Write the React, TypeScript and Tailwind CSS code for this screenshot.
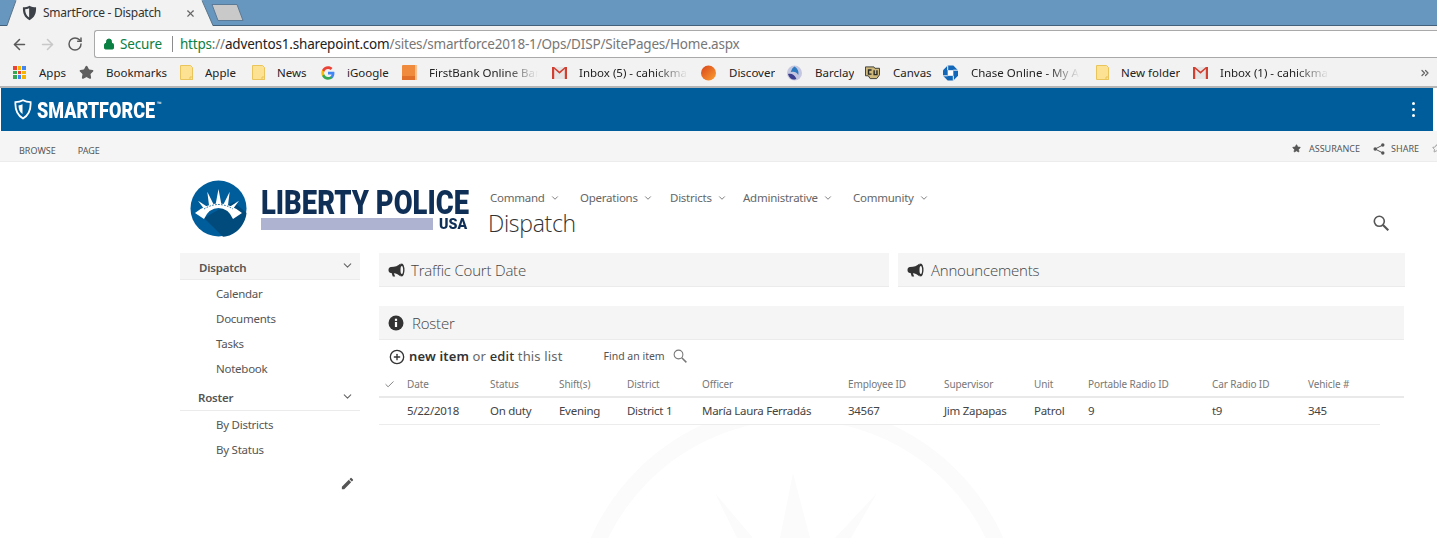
import { ArrowLeft, ArrowRight, Check, ChevronDown, ChevronsRight, CirclePlus, Lock, RotateCw, Star, X } from "lucide-react";
import type { ReactNode } from "react";

const Folder = () => (
  <svg width="13" height="15" viewBox="0 0 13 15">
    <path d="M.5.5h10l2 2v12H.5z" fill="#fde293" stroke="#eac55c" />
    <path d="M10 12h2.5v2.5H10z" fill="#fde293" stroke="#eac55c" />
  </svg>
);

const Gmail = () => (
  <svg width="15" height="12" viewBox="0 0 15 12">
    <rect width="15" height="12" fill="#e5e5e5" />
    <path d="M0 0h2.2v12H0zM12.8 0H15v12h-2.2z" fill="#d23f31" />
    <path d="M0 0h2l5.500 4.600L13 0h2L7.500 6.800z" fill="#d23f31" />
  </svg>
);

const GoogleG = () => (
  <svg width="14" height="14" viewBox="0 0 48 48">
    <path fill="#4285F4" d="M46 24.500c0-1.600-.1-3.100-.4-4.500H24v9h12.400c-.5 2.900-2.200 5.300-4.600 6.900v5.700h7.400C43.500 37.600 46 31.600 46 24.500z" />
    <path fill="#34A853" d="M24 47c6.200 0 11.400-2 15.200-5.500l-7.400-5.700c-2 1.400-4.700 2.200-7.800 2.200-6 0-11-4-12.800-9.500H3.600v5.900C7.400 41.900 15.100 47 24 47z" />
    <path fill="#FBBC05" d="M11.200 28.500c-.5-1.400-.7-2.900-.7-4.500s.3-3.100.7-4.500v-5.900H3.600C2 16.700 1 20.200 1 24s1 7.300 2.600 10.400z" />
    <path fill="#EA4335" d="M24 10c3.400 0 6.400 1.200 8.800 3.400l6.600-6.600C35.400 3.100 30.200 1 24 1 15.100 1 7.400 6.100 3.600 13.600l7.600 5.900C13 14 18 10 24 10z" />
  </svg>
);

const AppsGrid = () => {
  const colors = ["#ea4335", "#f4b400", "#4285f4", "#34a853", "#ea4335", "#f4b400", "#34a853", "#4285f4", "#f4b400"];
  return (
    <div className="grid grid-cols-3 gap-[1px]">
      {colors.map((c, i) => (
        <span key={i} className="size-[3.500px]" style={{ backgroundColor: c }} />
      ))}
    </div>
  );
};

const OrangeBook = () => (
  <svg width="15" height="15" viewBox="0 0 15 15">
    <rect width="15" height="15" rx="1" fill="#f08a3c" />
    <rect y="11" width="15" height="4" fill="#e0702a" />
    <rect x="13" width="2" height="15" fill="#fbc08f" />
  </svg>
);

const Sphere = () => (
  <svg width="16" height="16" viewBox="0 0 16 16">
    <defs>
      <linearGradient id="sun" x1="0" y1="0" x2="1" y2="1">
        <stop offset="0" stopColor="#d9441c" />
        <stop offset="1" stopColor="#fba12f" />
      </linearGradient>
    </defs>
    <circle cx="8" cy="8" r="8" fill="url(#sun)" />
  </svg>
);

const BarclayMark = () => (
  <svg width="16" height="16" viewBox="0 0 16 16">
    <circle cx="8" cy="8" r="8" fill="#c5c7e0" />
    <path d="M8 1c3 2 5 5 4 9-2-3-4-4-8-3 1-3 2-5 4-6z" fill="#2b79bf" />
    <path d="M1 9c4-1 7 1 9 5-3 2-7 1-9-5z" fill="#3d3f8f" />
  </svg>
);

const BuffMark = () => (
  <svg width="16" height="15" viewBox="0 0 16 15">
    <path d="M.5 1.500h9l1 1.500h5v7l-3 4h-7l-2-3h-3z" fill="#cfb87c" stroke="#3a3a32" />
    <path d="M3 4h4v1.500H4.500v3H7V10H3zM9 5h1.500v4H12V5h1.500v5.500H9z" fill="#2b2b26" />
  </svg>
);

const ChaseMark = () => (
  <svg width="16" height="16" viewBox="0 0 16 16">
    <path d="M5 0h6l5 5v6l-5 5H5l-5-5V5z" fill="#1267b8" />
    <rect x="5" y="5" width="6" height="6" fill="#fff" />
    <path d="M5 5V0M11 5h5M11 11v5M5 11H0" stroke="#fff" />
  </svg>
);

const TabShield = () => (
  <svg width="15" height="16" viewBox="0 0 20 22">
    <path d="M10 1c2.600 1.500 5.500 2.200 9 2.200.4 8-1.700 14-9 17.800C2.700 17.200.6 11.200 1 3.200 4.500 3.200 7.400 2.500 10 1z" fill="#3c4148" />
    <path d="M9.500 4.300v13c-3.800-2.700-5.500-6.700-5.500-11.500 2-.1 3.800-.6 5.500-1.500z" fill="#f2f2f2" />
  </svg>
);

const BarShield = () => (
  <svg width="18" height="21" viewBox="0 0 18 21">
    <path d="M9 1.200c2.300 1.300 4.800 1.900 7.600 2 .4 7.500-1.500 12.800-7.600 16.300C2.900 16 1 10.700 1.400 3.200c2.800-.1 5.300-.7 7.600-2z" fill="none" stroke="#fff" strokeWidth="1.800" />
    <path d="M8.500 5.200v9.800C5.800 13 4.500 10 4.500 6.400c1.500-.1 2.800-.5 4-1.200z" fill="#fff" />
  </svg>
);

const CrownLogo = () => (
  <svg width="57" height="57" viewBox="0 0 57 57">
    <circle cx="28.500" cy="28.500" r="28" fill="#005d9b" />
    <path d="M14 38l19 18.800C45 56 55 46 56.500 33L44 22 28 30z" fill="#004a7c" />
    <path d="M28.500 9l3 16h-6zM17.300 11.700l6.700 13.500-4.800 1.600zM39.700 11.700l-1.900 15.100-4.800-1.600zM8 20.800l10 6.400-3.200 2.800zM49 20.800l-6.800 9.200-3.200-2.800z" fill="#fff" />
    <path d="M5 33Q28.500 14 52 33L43 39Q38 28 28.500 28 19 28 14 39z" fill="#fff" />
    <path d="M14 29Q28.500 20 43 29" fill="none" stroke="#005d9b" strokeWidth="1" strokeDasharray="1.500 1.500" />
  </svg>
);

const Megaphone = () => (
  <svg width="17" height="14" viewBox="0 0 17 14" fill="#333">
    <path d="M12.500.5C10 3 7 4 3 4 1.300 4 .5 5.400.5 7s.8 3 2.500 3h.6l1.200 3.500h2.400L5.800 10.200c2.700.3 4.800 1.300 6.700 3.300z" />
    <ellipse cx="13.800" cy="7" rx="2.700" ry="6.500" />
    <ellipse cx="13.800" cy="7" rx="1.300" ry="4" fill="#f5f5f5" />
  </svg>
);

const InfoDot = () => (
  <svg width="16" height="16" viewBox="0 0 16 16">
    <circle cx="8" cy="8" r="7.500" fill="#333" />
    <rect x="6.900" y="7" width="2.200" height="5" fill="#fff" />
    <rect x="6.900" y="3.700" width="2.200" height="2.200" fill="#fff" />
  </svg>
);

const SearchGlyph = ({ size, color, width }: { size: number; color: string; width: number }) => (
  <svg width={size} height={size} viewBox="0 0 16 16" fill="none" stroke={color}>
    <circle cx="6.300" cy="6.300" r="5" strokeWidth={width} />
    <path d="M10 10l5.300 5.300" strokeWidth={width + 0.5} />
  </svg>
);

const ShareGlyph = () => (
  <svg width="12" height="12" viewBox="0 0 12 12" fill="#555" stroke="#555">
    <path d="M9.800 2L2.200 6l7.600 4" fill="none" strokeWidth="1" />
    <circle cx="9.800" cy="2" r="1.700" stroke="none" />
    <circle cx="2.200" cy="6" r="1.700" stroke="none" />
    <circle cx="9.800" cy="10" r="1.700" stroke="none" />
  </svg>
);

const EditGlyph = () => (
  <svg width="15" height="15" viewBox="0 0 24 24" fill="#555">
    <path d="M3 17.250V21h3.750L17.810 9.940l-3.750-3.750L3 17.250zM20.710 7.040a1 1 0 0 0 0-1.410l-2.340-2.340a1 1 0 0 0-1.410 0l-1.830 1.830 3.750 3.750 1.830-1.830z" />
  </svg>
);

const bookmarks: { icon: ReactNode; label: string; cls: string; fade?: boolean; textCls?: string }[] = [
  { icon: <AppsGrid />, label: "Apps", cls: "w-[67px]", textCls: "ml-[12px]" },
  { icon: <Star size={15} fill="#5f5f5f" color="#5f5f5f" />, label: "Bookmarks", cls: "w-[100px]", textCls: "ml-[12px]" },
  { icon: <Folder />, label: "Apple", cls: "w-[72px]", textCls: "ml-[11px]" },
  { icon: <Folder />, label: "News", cls: "w-[69px]", textCls: "ml-[11px]" },
  { icon: <GoogleG />, label: "iGoogle", cls: "w-[82px]", textCls: "ml-[12px]" },
  { icon: <OrangeBook />, label: "FirstBank Online Ban", cls: "w-[150px]", fade: true, textCls: "ml-[12px] w-[109px]" },
  { icon: <Gmail />, label: "Inbox (5) - cahickmar", cls: "w-[149px]", fade: true, textCls: "ml-[12px] w-[109px]" },
  { icon: <Sphere />, label: "Discover", cls: "w-[86px]", textCls: "ml-[13px]" },
  { icon: <BarclayMark />, label: "Barclay", cls: "w-[78px]", textCls: "ml-[13px]" },
  { icon: <BuffMark />, label: "Canvas", cls: "w-[78px]", textCls: "ml-[13px]" },
  { icon: <ChaseMark />, label: "Chase Online - My Acc", cls: "w-[152px]", fade: true, textCls: "ml-[13px] w-[109px]" },
  { icon: <Folder />, label: "New folder", cls: "w-[98px]", textCls: "ml-[11px]" },
  { icon: <Gmail />, label: "Inbox (1) - cahickmar", cls: "w-[150px]", fade: true, textCls: "ml-[12px] w-[109px]" },
];

const navItems = [
  { label: "Command", cls: "w-[90px]" },
  { label: "Operations", cls: "w-[90px]" },
  { label: "Districts", cls: "w-[73px]" },
  { label: "Administrative", cls: "w-[110px]" },
  { label: "Community", cls: "w-[90px]" },
];

const columns = ["Date", "Status", "Shift(s)", "District", "Officer", "Employee ID", "Supervisor", "Unit", "Portable Radio ID", "Car Radio ID", "Vehicle #"];
const row = ["5/22/2018", "On duty", "Evening", "District 1", "María Laura Ferradás", "34567", "Jim Zapapas", "Patrol", "9", "t9", "345"];
const gridCols = "grid-cols-[28px_83px_69px_68px_75px_146px_96px_90px_54px_124px_96px_72px]";

function PanelHeading({ icon, title, className, titleCls }: { icon: ReactNode; title: string; className: string; titleCls: string }) {
  return (
    <div className={`flex h-[34px] items-center border-b border-[#ebebeb] bg-[#f5f5f5] pl-[9px] ${className}`}>
      {icon}
      <h3 className={`mt-[1px] font-['Open_Sans',sans-serif] text-[15px] font-light tracking-[-0.2px] text-[#444] ${titleCls}`}>{title}</h3>
    </div>
  );
}

function SideLink({ label }: { label: string }) {
  return <div className="flex h-[25px] items-center pl-[36px] text-[11.500px] tracking-[-0.25px] text-[#555]">{label}</div>;
}

export default function App() {
  return (
    <div className="relative h-[538px] w-[1437px] overflow-hidden bg-white font-['Noto_Sans','Open_Sans',sans-serif]">
      {/* watermark */}
      <svg className="absolute left-0 top-0" width="1437" height="538" fill="none">
        <circle cx="797" cy="630" r="218" stroke="#fbfbfb" strokeWidth="16" />
        <path d="M715 493l38 45h-16zM793 473l17 65h-30zM877 493l-42 45h16z" fill="#fbfbfb" />
      </svg>

      {/* tab strip */}
      <div className="relative flex h-[26px] border-b border-[#44617c] bg-[#6796bf]">
        <div className="relative ml-[7px] flex h-[26px] w-[206px] items-center">
          <svg className="absolute left-0 top-0" width="206" height="26">
            <path d="M0 26L9 0h186l11 26z" fill="#f2f2f2" />
            <path d="M0 25.500L9 .5M195 .5l11 25" stroke="#5a7488" fill="none" />
          </svg>
          <div className="relative ml-[15px] flex items-center">
            <TabShield />
            <span className="ml-[6px] w-[142px] whitespace-nowrap text-[12px] tracking-[-0.28px] text-[#333]">SmartForce - Dispatch</span>
            <X size={11} color="#666" strokeWidth={2.500} />
          </div>
        </div>
        <svg className="-ml-[2px] mt-[4px]" width="34" height="17" viewBox="0 0 34 17">
          <path d="M1 .5h25l6 16H7z" fill="#c9c9c9" stroke="#5b7a96" />
        </svg>
      </div>

      {/* address bar */}
      <div className="flex h-[32px] items-center bg-[#f2f2f2] pl-[11px] pt-[4px]">
        <ArrowLeft size={17} color="#5a5a5a" strokeWidth={2.200} />
        <ArrowRight size={17} color="#c8c8c8" strokeWidth={2.200} className="ml-[11px]" />
        <RotateCw size={16} color="#5a5a5a" strokeWidth={2.200} className="ml-[11px]" />
        <div className="ml-[11px] flex h-[28px] flex-1 items-center rounded-l-[3px] border border-r-0 border-[#a9a9a9] bg-white pl-[8px]">
          <Lock size={12} color="#0b8043" fill="#0b8043" />
          <span className="ml-[5px] text-[13.500px] tracking-[-0.15px] text-[#0b8043]">Secure</span>
          <span className="ml-[10px] h-[16px] w-px bg-[#8c8c8c]" />
          <span className="ml-[7px] whitespace-nowrap text-[13.500px] tracking-[-0.18px] text-[#777]">
            <span className="text-[#0b8043]">https</span>://<span className="text-[#222]">adventos1.sharepoint.com</span>/sites/smartforce2018-1/Ops/DISP/SitePages/Home.aspx
          </span>
        </div>
      </div>

      {/* bookmarks */}
      <div className="flex h-[30px] items-center border-b-2 border-[#b5b5b5] bg-[#f2f2f2] pl-[12px] pt-[1px]">
        {bookmarks.map((b) => (
          <div key={b.label} className={`flex shrink-0 items-center text-[11.500px] text-[#222] ${b.cls}`}>
            <span className="flex w-[15px] shrink-0 justify-center">{b.icon}</span>
            <span className={`overflow-hidden whitespace-nowrap ${b.textCls ?? ""} ${b.fade ? "[mask-image:linear-gradient(to_right,black_70%,transparent)]" : ""}`}>
              {b.label}
            </span>
          </div>
        ))}
        <ChevronsRight size={12} color="#666" strokeWidth={2.500} className="ml-auto mr-[6px]" />
      </div>

      {/* suite bar */}
      <div className="ml-px mr-[4px] flex h-[43px] items-center justify-between bg-[#005d9b] pl-[13px] pr-[18px]">
        <div className="flex items-center">
          <BarShield />
          <span className="ml-[5px] mt-[1px] w-[120px] origin-left scale-x-[0.8] whitespace-nowrap font-['Roboto',sans-serif] text-[22.500px] font-black leading-none text-white">SMARTFORCE</span>
          <span className="-mt-[10px] text-[6px] text-white">™</span>
        </div>
        <div className="flex flex-col gap-[3px]">
          <span className="size-[3px] rounded-full bg-white" />
          <span className="size-[3px] rounded-full bg-white" />
          <span className="size-[3px] rounded-full bg-white" />
        </div>
      </div>

      {/* ribbon */}
      <div className="flex h-[31px] items-center border-b border-[#ececec] bg-[#f5f5f5] pl-[19px] text-[9px] text-[#555]">
        <span className="mt-[9px]">BROWSE</span>
        <span className="ml-[22px] mt-[9px]">PAGE</span>
        <div className="ml-auto mt-[5px] flex items-center">
          <Star size={9} fill="#555" color="#555" />
          <span className="ml-[8px]">ASSURANCE</span>
          <span className="ml-[13px]"><ShareGlyph /></span>
          <span className="ml-[6px]">SHARE</span>
          <Star size={9} color="#888" className="-mr-[4px] ml-[13px]" />
        </div>
      </div>

      {/* site header */}
      <div className="relative flex h-[91px] pl-[190px]">
        <div className="mt-[18px] flex items-start">
          <CrownLogo />
          <div className="ml-[14px] w-[208px]">
            <div className="mt-[9px] h-[27px] origin-left scale-x-[0.83] whitespace-nowrap font-['Roboto',sans-serif] text-[33px] font-black leading-[27px] text-[#0f2f57]">LIBERTY POLICE</div>
            <div className="mt-[2px] flex items-center">
              <span className="h-[12px] w-[172px] bg-[#adb3d1]" />
              <span className="ml-[6px] origin-left scale-x-[0.95] font-['Roboto',sans-serif] text-[15px] font-black leading-[12px] text-[#0f2f57]">USA</span>
            </div>
          </div>
        </div>
        <div className="ml-[19px] mt-[28px]">
          <nav className="flex h-[16px] items-center pl-[2px] text-[11.500px] tracking-[-0.25px] text-[#666]">
            {navItems.map((n) => (
              <div key={n.label} className={`flex items-center ${n.cls}`}>
                {n.label}
                <ChevronDown size={10} strokeWidth={2} className="ml-[5px]" />
              </div>
            ))}
          </nav>
          <h1 className="mt-[1px] font-['Open_Sans',sans-serif] text-[23px] font-light leading-[32px] tracking-[-0.3px] text-[#333]">Dispatch</h1>
        </div>
        <span className="absolute left-[1373px] top-[53px]"><SearchGlyph size={16} color="#555" width={1.600} /></span>
      </div>

      {/* body */}
      <div className="relative flex pl-[180px]">
        <aside className="w-[180px] shrink-0">
          <div className="flex h-[27px] items-center justify-between border-b border-[#ebebeb] bg-[#f5f5f5] pl-[19px] pr-[6px] pt-[3px] text-[11.500px] font-semibold tracking-[-0.2px] text-[#555]">
            Dispatch
            <ChevronDown size={13} color="#666" className="-mt-[4px]" />
          </div>
          <div className="pt-[1px]">
            {["Calendar", "Documents", "Tasks", "Notebook"].map((l) => (
              <SideLink key={l} label={l} />
            ))}
          </div>
          <div className="mt-[5px] flex h-[25px] items-center justify-between border-b border-[#ebebeb] pl-[18px] pr-[6px] text-[11.500px] font-semibold tracking-[-0.2px] text-[#555]">
            Roster
            <ChevronDown size={13} color="#666" className="-mt-[3px]" />
          </div>
          <div className="pt-[1px]">
            {["By Districts", "By Status"].map((l) => (
              <SideLink key={l} label={l} />
            ))}
          </div>
          <div className="mt-[14px] flex justify-end pr-[5px]">
            <EditGlyph />
          </div>
        </aside>

        <main className="ml-[19px] w-[1026px]">
          <div className="flex gap-[9px]">
            <PanelHeading icon={<Megaphone />} title="Traffic Court Date" className="w-[510px]" titleCls="ml-[6px]" />
            <PanelHeading icon={<Megaphone />} title="Announcements" className="w-[507px]" titleCls="ml-[7px]" />
          </div>
          <PanelHeading icon={<InfoDot />} title="Roster" className="mr-px mt-[19px]" titleCls="ml-[8px]" />
          <div className="flex h-[32px] items-center bg-white pl-[10px] pt-[2px]">
            <CirclePlus size={16} color="#333" strokeWidth={2} />
            <span className="ml-[4px] text-[13px] tracking-[0.15px] text-[#666]">
              <span className="font-semibold text-[#333]">new item</span> or <span className="font-medium text-[#333]">edit</span> this list
            </span>
            <span className="ml-[41px] text-[10.500px] text-[#555]">Find an item</span>
            <span className="ml-[8px] -mt-[2px]"><SearchGlyph size={14} color="#777" width={1.200} /></span>
          </div>
          <div className={`mr-px grid h-[26px] items-center border-b-2 border-[#e9e9e9] bg-white text-[10px] tracking-[-0.1px] text-[#777] ${gridCols}`}>
            <Check size={11} color="#777" className="ml-[5px]" />
            {columns.map((c) => (
              <span key={c} className="whitespace-nowrap">{c}</span>
            ))}
          </div>
          <div className={`grid h-[27px] w-[1001px] items-center border-b border-[#ececec] bg-white text-[11.500px] tracking-[-0.28px] text-[#444] ${gridCols}`}>
            <span />
            {row.map((c, i) => (
              <span key={i} className="whitespace-nowrap">{c}</span>
            ))}
          </div>
        </main>
      </div>
    </div>
  );
}
